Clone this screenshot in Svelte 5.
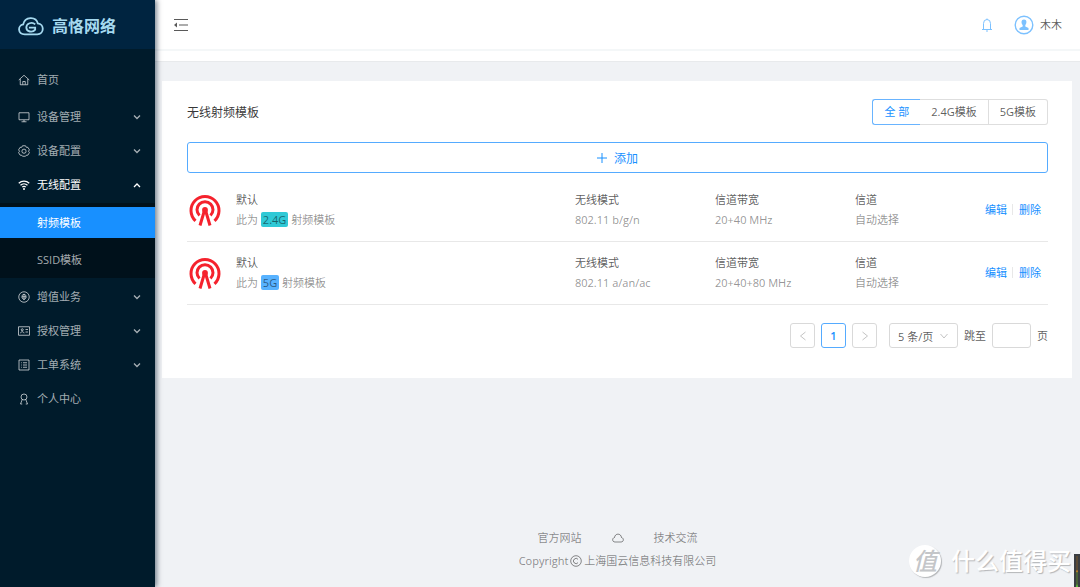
<script>
  let active = $state('射频模板');
  let band = $state('all');
  let pageSize = $state('5');
  let jumpTo = $state('');

  const menu = [
    { name: '设备管理', icon: 'desktop' },
    { name: '设备配置', icon: 'setting' },
    { name: '无线配置', icon: 'wifi', open: true, children: ['射频模板', 'SSID模板'] },
    { name: '增值业务', icon: 'value' },
    { name: '授权管理', icon: 'idcard' },
    { name: '工单系统', icon: 'order' }
  ];

  const bands = [
    { value: 'all', label: '全 部' },
    { value: '2.4G', label: '2.4G模板' },
    { value: '5G', label: '5G模板' }
  ];

  const templates = [
    { name: '默认', band: '2.4G', mode: '802.11 b/g/n', width: '20+40 MHz', channel: '自动选择' },
    { name: '默认', band: '5G', mode: '802.11 a/an/ac', width: '20+40+80 MHz', channel: '自动选择' }
  ];

  let shown = $derived(templates.filter((t) => band === 'all' || t.band === band));
</script>

{#snippet icon(name)}
  <svg class="icon" viewBox="0 0 24 24" aria-hidden="true">
    {#if name === 'home'}
      <path d="M1.5 12 12 2.5 22.5 12M4.5 10v11.5h15V10M9.5 21v-6h5v6" />
    {:else if name === 'desktop'}
      <path d="M2 3.5h20v14H2zM12 18v3.5M7 21.5h10" />
    {:else if name === 'setting'}
      <path d="M9 1.5h6l1.500 3 3.300.2 3 5-1.800 2.800 1.800 2.800-3 5-3.300.2-1.500 2H9l-1.500-2-3.300-.2-3-5L3 12.500 1.200 9.700l3-5 3.300-.2z" />
      <circle cx="12" cy="12.4" r="4.2" />
    {:else if name === 'wifi'}
      <path class="wave" d="M1.5 8.500C7.500 2.500 16.500 2.500 22.500 8.500M5 12.500c4-4 10-4 14 0M8.500 16.300c2-2 5-2 7 0" />
      <circle class="solid" cx="12" cy="20" r="2" />
    {:else if name === 'value'}
      <circle cx="12" cy="12" r="10.5" />
      <path d="M12 6v12M8 9l4-3 4 3v5l-4 3-4-3zM8 11.500h8" />
    {:else if name === 'idcard'}
      <path d="M1 3.500h22v17H1zM5 16.500c.5-4 6.500-4 7 0M15 9h5M15 14h5" />
      <circle cx="8.5" cy="9.5" r="2" />
    {:else if name === 'order'}
      <path d="M2 2h20v20H2zM6 7.500h1.500M10 7.500h8M6 12h1.500M10 12h8M6 16.500h1.500M10 16.500h8" />
    {:else if name === 'user'}
      <circle cx="12" cy="8" r="6" />
      <path d="M8.500 13 5 22h3.500M15.500 13 19 22h-3.500" />
    {/if}
  </svg>
{/snippet}

<div class="layout">
  <aside>
    <a class="logo" href="#home">
      <svg viewBox="0 0 50 36" aria-hidden="true">
        <path d="M13 33C-1 33-1 16 10 14 13-2 35-2 38 12c13 1 13 21-1 21z" />
        <path d="M33 14c-6-6-17-2-17 6s12 11 17 4v-4H21" />
      </svg>
      <span>高恪网络</span>
    </a>

    <nav>
      <a class="item home" href="#home">{@render icon('home')}<span>首页</span></a>
      {#each menu as m}
        <button class="item" class:open={m.open}>
          {@render icon(m.icon)}
          <span>{m.name}</span>
          <svg class="arrow" viewBox="0 0 10 10" aria-hidden="true">
            <path d={m.open ? 'M2 7l3-3 3 3' : 'M2 3.5l3 3 3-3'} />
          </svg>
        </button>
        {#if m.children}
          <div class="sub">
            {#each m.children as child}
              <a href="#{child}" class:active={active === child} onclick={() => (active = child)}>{child}</a>
            {/each}
          </div>
        {/if}
      {/each}
      <a class="item" href="#me">{@render icon('user')}<span>个人中心</span></a>
    </nav>
  </aside>

  <div class="body">
    <header>
      <button class="fold" aria-label="收起菜单">
        <svg viewBox="0 0 14 12" aria-hidden="true">
          <path d="M0 .5h14M5 6h9M0 11.5h14" />
          <path class="tri" d="M3 3.5v5L0 6z" />
        </svg>
      </button>
      <div class="tools">
        <button class="bell" aria-label="通知">
          <svg viewBox="0 0 12 14" aria-hidden="true">
            <path d="M1 11.5h10M2.500 11.500V5.500a3.500 4 0 0 1 7 0v6M6 .5v1M5 13h2" />
          </svg>
        </button>
        <a class="account" href="#me">
          <svg viewBox="0 0 20 20" aria-hidden="true">
            <circle cx="10" cy="10" r="8.8" />
            <path d="M10 4.500c3 0 3 3.500 1.300 5.700v1.300l3.200 1.500v2h-9v-2l3.200-1.500v-1.300C7 8 7 4.500 10 4.500z" />
          </svg>
          <span>木木</span>
        </a>
      </div>
    </header>
    <div class="strip"></div>

    <main>
      <div class="head">
        <h1>无线射频模板</h1>
        <div class="bands" role="radiogroup" aria-label="频段">
          {#each bands as b}
            <label class:checked={band === b.value}>
              <input type="radio" name="band" value={b.value} bind:group={band} />
              {b.label}
            </label>
          {/each}
        </div>
      </div>

      <button class="add">
        <svg viewBox="0 0 10 10" aria-hidden="true"><path d="M5 0v10M0 5h10" /></svg>
        添加
      </button>

      <ul>
        {#each shown as t}
          <li>
            <svg class="antenna" viewBox="0 0 32 32" aria-hidden="true">
              <path d="M6.500 26.800A14 14 0 1 1 25.500 26.800" />
              <path d="M10.500 21.500A8 8 0 1 1 21.500 21.500" />
              <path d="M15.300 17 11 31.500M16.700 17 21 31.500" />
              <circle cx="16" cy="16" r="2.9" />
            </svg>
            <div>
              <h2>{t.name}</h2>
              <p>此为 <mark class:five={t.band === '5G'}>{t.band}</mark> 射频模板</p>
            </div>
            <div>
              <h2>无线模式</h2>
              <p>{t.mode}</p>
            </div>
            <div>
              <h2>信道带宽</h2>
              <p>{t.width}</p>
            </div>
            <div>
              <h2>信道</h2>
              <p>{t.channel}</p>
            </div>
            <div class="actions">
              <a href="#edit">编辑</a>
              <a href="#delete">删除</a>
            </div>
          </li>
        {/each}
      </ul>

      <div class="pager">
        <button disabled aria-label="上一页">
          <svg viewBox="0 0 10 10" aria-hidden="true"><path d="M7.5 1 2.500 5l5 4" /></svg>
        </button>
        <button class="current">1</button>
        <button disabled aria-label="下一页">
          <svg viewBox="0 0 10 10" aria-hidden="true"><path d="M2.5 1l5 4-5 4" /></svg>
        </button>
        <div class="size">
          <select bind:value={pageSize} aria-label="每页条数">
            <option value="5">5 条/页</option>
            <option value="10">10 条/页</option>
            <option value="20">20 条/页</option>
          </select>
          <svg viewBox="0 0 10 10" aria-hidden="true"><path d="M1.5 3 5 7l3.500-4" /></svg>
        </div>
        <label>跳至 <input type="text" bind:value={jumpTo} /> 页</label>
      </div>
    </main>

    <footer>
      <div class="links">
        <a href="#site">官方网站</a>
        <a href="#cloud" aria-label="云">
          <svg viewBox="0 0 12 10" aria-hidden="true">
            <path d="M3 9C0 9 0 5 2.500 4.500 3 0 9 0 9.500 4.500 12 5 12 9 9 9z" />
          </svg>
        </a>
        <a href="#tech">技术交流</a>
      </div>
      <div class="copy">
        Copyright
        <svg viewBox="0 0 12 12" aria-hidden="true">
          <circle cx="6" cy="6" r="5.3" />
          <path d="M8 4.300a2.600 2.600 0 1 0 0 3.400" />
        </svg>
        上海国云信息科技有限公司
      </div>
    </footer>
  </div>

  <div class="watermark"><i>值</i><span>什么值得买</span></div>
  <div class="meter"></div>
</div>

<style>
  :global(body) {
    margin: 0;
    background: #f0f2f5;
  }

  .layout {
    position: relative;
    display: flex;
    min-height: 100vh;
    color: rgba(0, 0, 0, 0.65);
    font: 11px/17px "Open Sans", "Noto Sans CJK SC", sans-serif;
  }

  a {
    color: inherit;
    text-decoration: none;
  }

  button,
  input,
  select {
    box-sizing: border-box;
    font: inherit;
    color: inherit;
  }

  button {
    padding: 0;
    border: 0;
    background: none;
    cursor: pointer;
  }

  svg {
    flex: none;
    fill: none;
    stroke: currentColor;
  }

  h1,
  h2,
  p,
  ul {
    margin: 0;
    padding: 0;
    font-weight: 400;
  }

  /* sidebar */
  aside {
    flex: none;
    width: 155px;
    background: #001b2b;
    box-shadow: 2px 0 5px rgba(0, 21, 41, 0.5);
    z-index: 1;
  }

  .logo {
    display: flex;
    align-items: center;
    gap: 8px;
    height: 49px;
    padding: 3px 18px 0;
    box-sizing: border-box;
    background: #002440;
    color: #a5d9ef;
    font-size: 16px;
    font-weight: 700;
  }

  .logo svg {
    width: 26px;
    height: 19px;
    stroke-width: 3.5;
  }

  nav {
    display: flex;
    flex-direction: column;
    gap: 3px;
    padding-top: 15px;
  }

  .item {
    display: flex;
    align-items: center;
    gap: 7px;
    height: 31px;
    padding: 0 13px 0 18px;
    color: rgba(255, 255, 255, 0.65);
    text-align: left;
  }

  .item.home {
    margin-bottom: 3px;
  }

  .item.open {
    color: #fff;
  }

  .icon {
    width: 12px;
    height: 12px;
    stroke-width: 2;
  }

  .icon .wave {
    stroke-width: 2.5;
  }

  .icon .solid {
    fill: currentColor;
    stroke: none;
  }

  .arrow {
    width: 10px;
    height: 10px;
    margin-left: auto;
    stroke-width: 1.3;
  }

  .sub {
    display: flex;
    flex-direction: column;
    gap: 6px;
    padding: 4px 0 3px;
    background: #00111b;
  }

  .sub a {
    height: 31px;
    padding-left: 37px;
    line-height: 31px;
    color: rgba(255, 255, 255, 0.65);
  }

  .sub a.active {
    background: #1890ff;
    color: #fff;
  }

  /* right side */
  .body {
    flex: 1;
    display: flex;
    flex-direction: column;
    min-width: 0;
  }

  header {
    display: flex;
    align-items: center;
    justify-content: space-between;
    height: 49px;
    padding: 0 18px 0 19px;
    border-bottom: 2px solid #f4f7f8;
    background: #fff;
  }

  .strip {
    height: 10px;
    border-bottom: 1px solid #e8eaec;
    background: #fff;
  }

  .fold svg {
    display: block;
    width: 14px;
    height: 12px;
  }

  .fold .tri {
    fill: currentColor;
    stroke: none;
  }

  .tools,
  .account {
    display: flex;
    align-items: center;
  }

  .tools {
    gap: 21px;
  }

  .account {
    gap: 6px;
  }

  .bell svg {
    display: block;
    width: 12px;
    height: 14px;
    color: #7cc1ff;
  }

  .account svg {
    width: 20px;
    height: 20px;
    color: #7cc1ff;
    stroke-width: 1.4;
  }

  .account path {
    fill: currentColor;
    stroke: none;
  }

  main {
    margin: 19px 8px 24px 7px;
    padding: 18px 24px 30px 25px;
    background: #fff;
  }

  .head {
    display: flex;
    align-items: center;
    justify-content: space-between;
    margin-bottom: 17px;
  }

  h1 {
    color: rgba(0, 0, 0, 0.8);
    font-size: 12px;
  }

  .bands {
    display: flex;
  }

  .bands label {
    padding: 0 11px;
    border: 1px solid #dedede;
    border-left-width: 0;
    line-height: 24px;
    cursor: pointer;
  }

  .bands label:first-child {
    border-left-width: 1px;
    border-radius: 3px 0 0 3px;
  }

  .bands label:last-child {
    border-radius: 0 3px 3px 0;
  }

  .bands .checked {
    border-color: #69b4ff;
    color: #1890ff;
  }

  .bands .checked:first-child {
    border-right-width: 0;
  }

  .bands input {
    position: absolute;
    opacity: 0;
  }

  .add {
    display: flex;
    align-items: center;
    justify-content: center;
    gap: 7px;
    width: 100%;
    height: 31px;
    margin-bottom: 6px;
    padding-top: 1px;
    border: 1px solid #55abff;
    border-radius: 3px;
    color: #1890ff;
    font-size: 12px;
  }

  .add svg {
    width: 10px;
    height: 10px;
  }

  ul {
    list-style: none;
  }

  li {
    display: grid;
    grid-template-columns: 49px 1fr 140px 140px 130px 63px;
    align-items: center;
    height: 61px;
    padding-bottom: 1px;
    border-bottom: 1px solid #e8e8e8;
  }

  .antenna {
    width: 32px;
    height: 32px;
    margin-left: 2px;
    color: #f5222d;
    stroke-width: 3;
  }

  .antenna circle {
    fill: currentColor;
    stroke: none;
  }

  h2 {
    margin-bottom: 3px;
    font-size: 11px;
  }

  p {
    color: rgba(0, 0, 0, 0.43);
  }

  mark {
    display: inline-block;
    padding: 0 2px;
    border-radius: 2px;
    background: #2fc9d6;
    color: rgba(0, 0, 0, 0.5);
    line-height: 15px;
  }

  mark.five {
    background: #57b2ff;
  }

  .actions {
    display: flex;
    align-items: center;
    color: #1890ff;
  }

  .actions a {
    line-height: 11px;
  }

  .actions a + a {
    margin-left: 5px;
    padding-left: 6px;
    border-left: 1px solid #e8e8e8;
  }

  .pager {
    display: flex;
    justify-content: flex-end;
    gap: 6px;
    margin-top: 18px;
    line-height: 25px;
  }

  .pager button {
    display: flex;
    align-items: center;
    justify-content: center;
    width: 25px;
    height: 25px;
    border: 1px solid #d9d9d9;
    border-radius: 3px;
  }

  .pager button:disabled {
    color: #c4c4c4;
  }

  .pager .current {
    border-color: #55abff;
    color: #1890ff;
    font-weight: 600;
  }

  .pager svg {
    width: 10px;
    height: 10px;
  }

  .size {
    display: grid;
    align-items: center;
    margin-left: 6px;
  }

  .size select {
    grid-area: 1 / 1;
    width: 69px;
    height: 25px;
    padding: 0 8px;
    border: 1px solid #d9d9d9;
    border-radius: 3px;
    background: #fff;
    appearance: none;
  }

  .size svg {
    grid-area: 1 / 1;
    justify-self: end;
    margin-right: 9px;
    color: #c4c4c4;
    pointer-events: none;
  }

  .pager label {
    display: flex;
    gap: 6px;
  }

  .pager input {
    width: 39px;
    height: 25px;
    padding: 0 6px;
    border: 1px solid #d9d9d9;
    border-radius: 3px;
  }

  footer {
    margin-top: auto;
    padding-bottom: 18px;
    color: rgba(0, 0, 0, 0.45);
  }

  .links,
  .copy {
    display: flex;
    align-items: center;
    justify-content: center;
  }

  .links {
    gap: 30px;
    margin-bottom: 6px;
  }

  .links svg {
    display: block;
    width: 12px;
    height: 10px;
  }

  .copy {
    gap: 2px;
  }

  .copy svg {
    width: 12px;
    height: 12px;
  }

  .watermark {
    position: absolute;
    right: 9px;
    bottom: 10px;
    display: flex;
    align-items: center;
    gap: 10px;
    color: #fff;
    font-size: 24px;
    font-weight: 500;
    line-height: 32px;
    text-shadow: 1px 1px 1px #b4b6b9;
  }

  .watermark i {
    width: 32px;
    height: 32px;
    border-radius: 50%;
    background: #fff;
    box-shadow: 1px 1px 1px #b4b6b9;
    color: #c4c6c9;
    text-align: center;
    text-shadow: none;
  }

  .meter {
    position: absolute;
    right: 0;
    bottom: 0;
    width: 2px;
    height: 31px;
    border: 2px solid #3a3d42;
    border-bottom: 0;
    background: linear-gradient(#5a4a36 46%, #e08a1e 48%, #4b6238 54%, #4b6238 90%, #5fd038);
  }
</style>
